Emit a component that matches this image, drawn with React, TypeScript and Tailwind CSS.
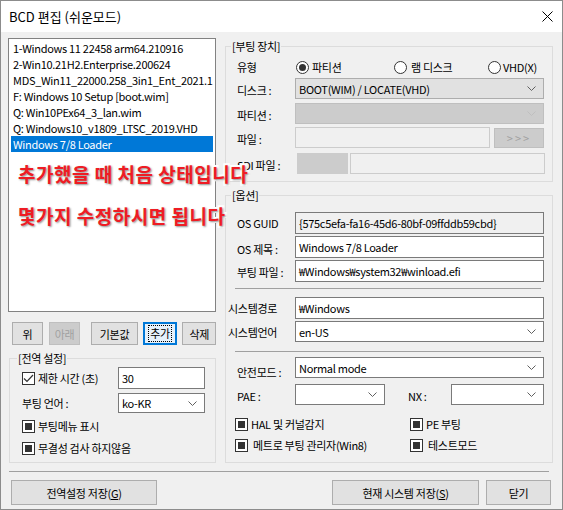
import React from 'react';

type ComboKind = 'button' | 'disabled' | 'white';

function Chevron({ color = '#606060' }: { color?: string }) {
  return (
    <svg width="9" height="5" viewBox="0 0 9 5" className="shrink-0">
      <path d="M0.5 0.5 L4.5 4.5 L8.5 0.5" fill="none" stroke={color} strokeWidth="1" />
    </svg>
  );
}

function Combo({ kind, value, className }: { kind: ComboKind; value?: string; className: string }) {
  const look =
    kind === 'button'
      ? 'bg-[#e1e1e1] border-[#adadad]'
      : kind === 'disabled'
        ? 'bg-[#cccccc] border-[#bfbfbf]'
        : 'bg-white border-[#7a7a7a]';
  return (
    <div className={`flex items-center justify-between border pl-[3px] pr-[7px] ${look} ${className}`}>
      <span className="whitespace-nowrap">{value}</span>
      <Chevron color={kind === 'disabled' ? '#bfbfbf' : '#606060'} />
    </div>
  );
}

function Field({ value, readOnly, className }: { value: string; readOnly?: boolean; className: string }) {
  return (
    <div
      className={`flex items-center border border-[#7a7a7a] pl-[3px] whitespace-nowrap ${readOnly ? 'bg-[#f0f0f0]' : 'bg-white'} ${className}`}
    >
      {value}
    </div>
  );
}

function Check({ checked }: { checked?: boolean }) {
  return (
    <span className="flex h-[13px] w-[13px] shrink-0 items-center justify-center border border-[#333333] bg-white">
      {checked ? (
        <svg width="11" height="9" viewBox="0 0 11 9">
          <path d="M1 4.5 L4 7.5 L10 1" fill="none" stroke="#333333" strokeWidth="1.2" />
        </svg>
      ) : (
        <span className="h-[7px] w-[7px] bg-[#333333]" />
      )}
    </span>
  );
}

function Radio({ on }: { on?: boolean }) {
  return (
    <span className="flex h-[13px] w-[13px] shrink-0 items-center justify-center rounded-full border border-[#333333] bg-white">
      {on && <span className="h-[7px] w-[7px] rounded-full bg-[#333333]" />}
    </span>
  );
}

function Btn({ children, className, disabled, focused }: { children: React.ReactNode; className: string; disabled?: boolean; focused?: boolean }) {
  if (focused) {
    return (
      <div className={`flex items-center justify-center border-2 border-[#0078d7] bg-[#e5f1fb] ${className}`}>
        <span className="border border-dotted border-black px-[1px] leading-[15px]">{children}</span>
      </div>
    );
  }
  return (
    <div
      className={`flex items-center justify-center border ${disabled ? 'border-[#bfbfbf] bg-[#cccccc] text-[#a0a0a0]' : 'border-[#adadad] bg-[#e1e1e1]'} ${className}`}
    >
      {children}
    </div>
  );
}

const entries = [
  '1-Windows 11 22458 arm64.210916',
  '2-Win10.21H2.Enterprise.200624',
  'MDS_Win11_22000.258_3in1_Ent_2021.11',
  'F: Windows 10 Setup [boot.wim]',
  'Q: Win10PEx64_3_lan.wim',
  'Q: Windows10_v1809_LTSC_2019.VHD',
  'Windows 7/8 Loader',
];

export default function App() {
  return (
    <div className="relative h-[510px] w-[563px] overflow-hidden border border-[#8c8c8c] bg-[#f0f0f0] text-[11px] leading-[16px] tracking-[-0.3px] text-black [font-family:'Noto_Sans_CJK_KR','Noto_Sans',sans-serif]">
      {/* title bar */}
      <div className="flex h-[31px] items-center justify-between bg-white pl-[8px] pr-[9px]">
        <span className="text-[13px] tracking-normal">BCD 편집 (쉬운모드)</span>
        <svg width="11" height="11" viewBox="0 0 11 11">
          <path d="M0.5 0.5 L10.5 10.5 M10.5 0.5 L0.5 10.5" stroke="#000" strokeWidth="1" />
        </svg>
      </div>

      <div className="flex pl-[7px]">
        {/* left column */}
        <div className="flex w-[208px] flex-col">
          <div className="mt-[6px] h-[274px] overflow-hidden border border-[#828282] bg-white px-[2px] py-[1px]">
            {entries.map((e, i) => (
              <div
                key={e}
                className={`h-[16px] overflow-hidden whitespace-nowrap pl-[2px] ${i === entries.length - 1 ? 'bg-[#0078d7] text-white' : ''}`}
              >
                {e}
              </div>
            ))}
          </div>

          <div className="mt-[10px] flex h-[23px]">
            <Btn className="ml-[4px] w-[31px]">위</Btn>
            <Btn className="ml-[6px] w-[32px]" disabled>
              아래
            </Btn>
            <Btn className="ml-[11px] w-[47px]">기본값</Btn>
            <Btn className="ml-[5px] w-[35px]" focused>
              추가
            </Btn>
            <Btn className="ml-[5px] w-[34px]">삭제</Btn>
          </div>

          <fieldset className="mt-[5px] ml-[1px] h-[113px] w-[207px] border border-[#dcdcdc] p-0">
            <legend className="ml-[7px] px-[1px] leading-[16px]">[전역 설정]</legend>
            <div className="mt-[1px] flex h-[22px] items-center pl-[12px]">
              <div className="flex w-[96px] items-center gap-[3px]">
                <Check checked />
                <span>제한 시간 (초)</span>
              </div>
              <Field value="30" className="h-[22px] w-[87px]" />
            </div>
            <div className="mt-[4px] flex h-[20px] items-center pl-[12px]">
              <span className="w-[96px]">부팅 언어 :</span>
              <Combo kind="white" value="ko-KR" className="h-[20px] w-[87px]" />
            </div>
            <div className="mt-[5px] flex h-[16px] items-center gap-[3px] pl-[12px]">
              <Check />
              <span>부팅메뉴 표시</span>
            </div>
            <div className="mt-[6px] flex h-[16px] items-center gap-[3px] pl-[12px]">
              <Check />
              <span>무결성 검사 하지않음</span>
            </div>
          </fieldset>
        </div>

        {/* right column */}
        <div className="ml-[9px] flex w-[328px] flex-col">
          <fieldset className="mt-[6px] h-[144px] border border-[#dcdcdc] p-0">
            <legend className="ml-[5px] px-[1px] leading-[16px]">[부팅 장치]</legend>
            <div className="mt-[5px] flex h-[16px] items-center pl-[11px]">
              <span className="w-[58px]">유형</span>
              <div className="flex w-[99px] items-center gap-[3px] pl-[1px]">
                <Radio on />
                <span>파티션</span>
              </div>
              <div className="flex w-[94px] items-center gap-[4px]">
                <Radio />
                <span>램 디스크</span>
              </div>
              <div className="flex items-center gap-[2px]">
                <Radio />
                <span>VHD(X)</span>
              </div>
            </div>
            <div className="mt-[3px] flex h-[21px] items-center pl-[11px]">
              <span className="w-[58px] pt-[3px]">디스크 :</span>
              <Combo kind="button" value="BOOT(WIM) / LOCATE(VHD)" className="h-[21px] w-[249px]" />
            </div>
            <div className="mt-[4px] flex h-[21px] items-center pl-[11px]">
              <span className="w-[58px] pt-[3px]">파티션 :</span>
              <Combo kind="disabled" className="h-[21px] w-[249px]" />
            </div>
            <div className="mt-[3px] flex h-[21px] items-center pl-[11px]">
              <span className="w-[58px] pt-[3px]">파일 :</span>
              <div className="h-[21px] w-[195px] border border-[#cccccc] bg-[#f0f0f0]" />
              <div className="ml-[4px] flex h-[20px] w-[50px] items-center justify-center border border-[#bfbfbf] bg-[#cccccc] tracking-[2px] text-[#a0a0a0]">
                &gt;&gt;&gt;
              </div>
            </div>
            <div className="mt-[5px] flex h-[21px] items-center pl-[11px]">
              <span className="w-[58px] whitespace-nowrap pt-[3px]">SDI 파일 :</span>
              <div className="ml-[2px] h-[21px] w-[51px] border border-[#cccccc] bg-[#cccccc]" />
              <div className="ml-[2px] h-[21px] w-[195px] border border-[#cccccc] bg-[#f0f0f0]" />
            </div>
          </fieldset>

          <fieldset className="mt-[5px] h-[276px] border border-[#dcdcdc] p-0">
            <legend className="ml-[5px] px-[1px] leading-[16px]">[옵션]</legend>
            <div className="mt-[9px] flex h-[22px] items-center pl-[11px]">
              <span className="w-[58px]">OS GUID</span>
              <Field value="{575c5efa-fa16-45d6-80bf-09ffddb59cbd}" readOnly className="h-[22px] w-[249px]" />
            </div>
            <div className="mt-[2px] flex h-[22px] items-center pl-[11px]">
              <span className="w-[58px] pt-[3px]">OS 제목 :</span>
              <Field value="Windows 7/8 Loader" className="h-[22px] w-[249px]" />
            </div>
            <div className="mt-[2px] flex h-[22px] items-center pl-[11px]">
              <span className="w-[58px] whitespace-nowrap pt-[2px]">부팅 파일 :</span>
              <Field value="₩Windows₩system32₩winload.efi" className="h-[22px] w-[249px]" />
            </div>
            <div className="mt-[6px] ml-[9px] h-px w-[306px] bg-[#a0a0a0]" />
            <div className="mt-[8px] flex h-[22px] items-center pl-[2px]">
              <span className="w-[67px]">시스템경로</span>
              <Field value="₩Windows" className="h-[22px] w-[249px]" />
            </div>
            <div className="mt-[2px] flex h-[21px] items-center pl-[2px]">
              <span className="w-[67px]">시스템언어</span>
              <Combo kind="white" value="en-US" className="h-[21px] w-[249px]" />
            </div>
            <div className="mt-[9px] ml-[9px] h-px w-[306px] bg-[#a0a0a0]" />
            <div className="mt-[5px] flex h-[21px] items-start pl-[11px]">
              <span className="w-[58px] pt-[7px]">안전모드 :</span>
              <Combo kind="white" value="Normal mode" className="h-[21px] w-[249px]" />
            </div>
            <div className="mt-[6px] flex h-[21px] items-center pl-[11px]">
              <span className="w-[58px] pt-[3px]">PAE :</span>
              <Combo kind="white" className="h-[21px] w-[90px]" />
              <span className="ml-[23px] w-[43px] pt-[3px]">NX :</span>
              <Combo kind="white" className="h-[21px] w-[93px]" />
            </div>
            <div className="mt-[11px] flex h-[16px] items-center pl-[9px]">
              <div className="flex w-[175px] items-center gap-[3px]">
                <Check />
                <span>HAL 및 커널감지</span>
              </div>
              <div className="flex items-center gap-[3px]">
                <Check />
                <span>PE 부팅</span>
              </div>
            </div>
            <div className="mt-[5px] flex h-[16px] items-center pl-[9px]">
              <div className="flex w-[175px] items-center gap-[5px]">
                <Check />
                <span>메트로 부팅 관리자(Win8)</span>
              </div>
              <div className="flex items-center gap-[5px]">
                <Check />
                <span>테스트모드</span>
              </div>
            </div>
          </fieldset>
        </div>
      </div>

      <div className="mt-[8px] ml-[8px] h-px w-[540px] bg-[#a0a0a0]" />

      <div className="mt-[8px] flex h-[25px] justify-between pl-[10px] pr-[11px]">
        <Btn className="w-[146px]">
          <span>
            전역설정 저장(<span className="underline">G</span>)
          </span>
        </Btn>
        <div className="flex">
          <Btn className="w-[147px]">
            <span>
              현재 시스템 저장(<span className="underline">S</span>)
            </span>
          </Btn>
          <Btn className="ml-[7px] w-[65px]">닫기</Btn>
        </div>
      </div>

      {/* annotation over the dialog */}
      <div className="absolute top-[161px] left-[17px] flex flex-col gap-[19px] text-[19px] leading-[23px] font-bold tracking-[0.5px] whitespace-nowrap text-[#ee1c24] [-webkit-text-stroke:4px_white] [paint-order:stroke_fill] [text-shadow:1px_1px_2px_rgba(0,0,0,0.45)]">
        <span>추가했을 때 처음 상태입니다</span>
        <span>몇가지 수정하시면 됩니다</span>
      </div>
    </div>
  );
}
